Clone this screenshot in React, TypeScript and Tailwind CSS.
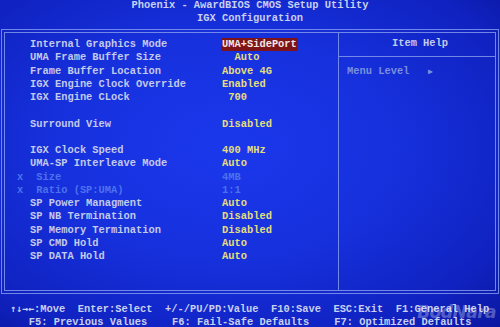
import React from 'react';

type Row = { label?: string; value?: string; mark?: boolean; dim?: boolean; active?: boolean };

const rows: Row[] = [
  { label: 'Internal Graphics Mode', value: 'UMA+SidePort', active: true },
  { label: 'UMA Frame Buffer Size', value: '  Auto' },
  { label: 'Frame Buffer Location', value: 'Above 4G' },
  { label: 'IGX Engine Clock Override', value: 'Enabled' },
  { label: 'IGX Engine CLock', value: ' 700' },
  {},
  { label: 'Surround View', value: 'Disabled' },
  {},
  { label: 'IGX Clock Speed', value: '400 MHz' },
  { label: 'UMA-SP Interleave Mode', value: 'Auto' },
  { label: ' Size', value: '4MB', mark: true, dim: true },
  { label: ' Ratio (SP:UMA)', value: '1:1', mark: true, dim: true },
  { label: 'SP Power Managment', value: 'Auto' },
  { label: 'SP NB Termination', value: 'Disabled' },
  { label: 'SP Memory Termination', value: 'Disabled' },
  { label: 'SP CMD Hold', value: 'Auto' },
  { label: 'SP DATA Hold', value: 'Auto' },
];

export default function App() {
  return (
    <div className="relative w-[500px] h-[327px] overflow-hidden bg-[radial-gradient(ellipse_at_45%_45%,#1b38ec_0%,#1630dc_45%,#1022c0_80%,#0a17a0_100%)] font-['Liberation_Mono',monospace] font-bold text-[10.4px] text-[#c3caea]">
      {/* title */}
      <div className="-mt-[1px] h-[30px] text-center leading-[12.5px] text-[#c8d0f0]">
        <div>Phoenix - AwardBIOS CMOS Setup Utility</div>
        <div>IGX Configuration</div>
      </div>

      {/* main box, double outline */}
      <div className="ml-[1px] mr-[1px] h-[265px] border border-[#8aa0ee]/80 p-[2px]">
        <div className="flex h-full border border-[#8aa0ee]/80">
          <div className="w-[334px] shrink-0 border-r border-[#8aa0ee]/80 pl-[12px] pt-[5px] leading-[13.25px]">
            {rows.map((r, i) => (
              <div key={i} className="flex h-[13.25px] whitespace-pre">
                <span className="w-[13px] text-[#4e72ee]">{r.mark ? 'x' : ''}</span>
                <span className={`w-[192px] ${r.dim ? 'text-[#4e72ee]' : ''}`}>{r.label ?? ''}</span>
                {r.value && (
                  <span
                    className={
                      r.active
                        ? 'bg-[#7c1418] px-[1px] -ml-[1px] text-[#f2e6e6]'
                        : r.dim
                          ? 'text-[#4e72ee]'
                          : 'text-[#e4df7c]'
                    }
                  >
                    {r.value}
                  </span>
                )}
              </div>
            ))}
          </div>
          <div className="flex-1 flex flex-col">
            <div className="h-[24px] border-b border-[#8aa0ee]/80 text-center leading-[21px] pl-[6px]">Item Help</div>
            <div className="pl-[8px] pt-[7px] text-[#7a90dc] whitespace-pre flex items-center">
              <span>Menu Level   </span>
              <span className="text-[8px]">▶</span>
            </div>
          </div>
        </div>
      </div>

      {/* footer */}
      <div className="mt-[8px] pl-[10px] leading-[13px] whitespace-pre text-[#c8d0f0]">
        <div className="flex items-baseline">
          <span className="font-['DejaVu_Sans_Mono',monospace] text-[10px]">↑↓→←</span>
          <span>:Move  Enter:Select  +/-/PU/PD:Value  F10:Save  ESC:Exit  F1:General Help</span>
        </div>
        <div>   F5: Previous Values    F6: Fail-Safe Defaults    F7: Optimized Defaults</div>
      </div>

      {/* watermark */}
      <div className="absolute right-[4px] bottom-[2px] font-['DejaVu_Sans',sans-serif] font-bold italic text-[17px] tracking-[-0.5px] text-white/30">
        BodNara
      </div>
    </div>
  );
}
